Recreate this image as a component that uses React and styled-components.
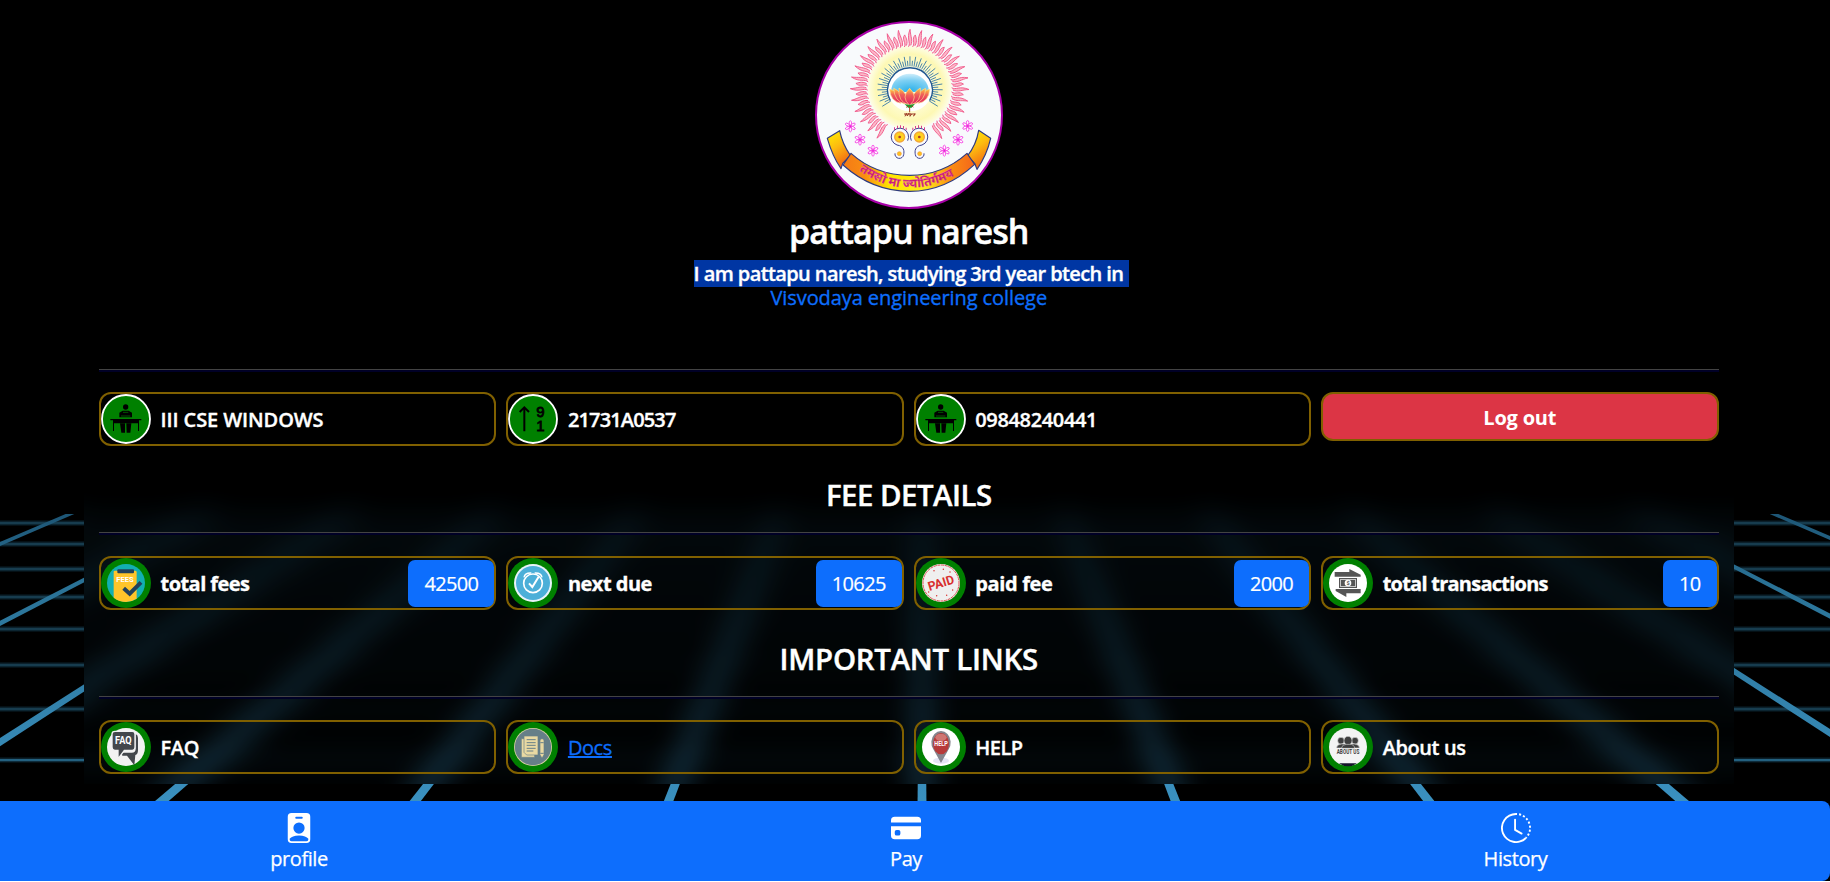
import React from "react";
import styled, { createGlobalStyle } from "styled-components";
import { BsPersonBadgeFill, BsCreditCardFill, BsClockHistory } from "react-icons/bs";

const GlobalStyle = createGlobalStyle`
  *, *::before, *::after { box-sizing: border-box; }
  body {
    margin: 0;
    background: #fff;
    overflow: hidden;
    font-family: "Open Sans", "Noto Sans", sans-serif;
    font-size: 20px;
    line-height: 24px;
    color: #fff;
  }
  h1, h2, p { margin: 0; }
`;

const Screen = styled.div`
  position: relative;
  display: flex;
  flex-direction: column;
  height: 881px;
  background: #000;
  overflow: hidden;
`;

const Backdrop = styled.svg`
  position: absolute;
  inset: 0;
  width: 1830px;
  height: 881px;
`;

const Panel = styled.main`
  position: relative;
  width: 1650px;
  height: 784px;
  margin-left: 84px;
  padding: 21px 15.5px 0 15px;
`;

const Intro = styled.header`
  display: flex;
  flex-direction: column;
  align-items: center;
  height: 348px;
  text-align: center;
`;

const Avatar = styled.svg`
  display: block;
  flex: none;
  width: 188px;
  height: 188px;
`;

const Name = styled.h1`
  margin-top: 1px;
  font-size: 34px;
  font-weight: 600;
  line-height: 42px;
  letter-spacing: -0.95px;
  -webkit-text-stroke: 0.5px currentColor;
`;

const Bio = styled.p`
  margin-top: 10px;
  font-weight: 600;
  letter-spacing: -0.6px;
  -webkit-text-stroke: 0.35px currentColor;
`;

const Selected = styled.span`
  margin-right: -5px;
  padding-right: 5.5px;
  background: #0036a3;
`;

const College = styled.span`
  font-weight: 400;
  letter-spacing: -0.08px;
  color: #0d6efd;
`;

const Divider = styled.div`
  height: 3px;
  border-top: 1px solid #434343;
  background: #000026;
`;

const Row = styled.div`
  display: grid;
  grid-template-columns: repeat(4, 1fr);
  gap: 10px;
  margin-top: ${(p) => p.$top || 21}px;
`;

const Heading = styled.h2`
  margin: 31px 0 19px;
  font-size: 29.4px;
  font-weight: 600;
  line-height: 36px;
  letter-spacing: ${(p) => p.$track}px;
  text-align: center;
  -webkit-text-stroke: 0.4px currentColor;
`;

const Card = styled.div`
  display: flex;
  align-items: center;
  height: 54px;
  border: 2px solid #806000;
  border-radius: 12px;
`;

const Round = styled.svg`
  flex: none;
  width: 50px;
  height: 50px;
`;

const Label = styled.span`
  flex: 1;
  padding: 1px 0 0 9.5px;
  font-weight: ${(p) => p.$weight || 600};
  letter-spacing: ${(p) => p.$track || 0}px;
  -webkit-text-stroke: 0.35px currentColor;
`;

const DocsLink = styled.a`
  font-weight: 400;
  color: #0d6efd;
  text-decoration: underline;
  text-decoration-thickness: 2px;
`;

const Amount = styled.span`
  height: 47px;
  padding: 12px 16px 0;
  border-radius: 7px;
  background: #0d6efd;
  font-weight: 400;
  letter-spacing: -0.64px;
  -webkit-text-stroke: 0.2px currentColor;
`;

const LogoutButton = styled.button`
  height: 49px;
  padding: 2px 0 0;
  border: 2px solid #806000;
  border-radius: 12px;
  background: #dc3545;
  font: 700 20px/24px "Open Sans", sans-serif;
  letter-spacing: -0.2px;
  color: #fff;
`;

const NavBar = styled.nav`
  position: relative;
  height: 80px;
  margin-top: 17px;
  padding-top: 12px;
  border-radius: 0 8px 8px 0;
  background: #0d6efd;
`;

const NavItems = styled.div`
  display: grid;
  grid-template-columns: 608px 606px 613px;
  margin-left: -5px;
`;

const NavItem = styled.div`
  display: flex;
  flex-direction: column;
  align-items: center;
  gap: 4px;
  letter-spacing: -0.4px;
  -webkit-text-stroke: 0.25px currentColor;
  svg { width: 30px; height: 30px; }
`;

/* Perspective floor: rays meet at (922, 148). */
const RAYS = [-7, -6, -5, -4, -3, -2, -1, 0, 1, 2, 3, 4, 5, 6, 7];
const LEVELS = [523, 544, 569, 597, 629, 665, 709, 760, 822];
const rayX = (k, y) => 922 + k * 0.388 * (y - 148);

function Floor() {
  return (
    <Backdrop viewBox="0 0 1830 881">
      <defs>
        <linearGradient id="ray" gradientUnits="userSpaceOnUse" x1="0" y1="512" x2="0" y2="800">
          <stop offset="0" stopColor="#1d5575" />
          <stop offset=".25" stopColor="#2a7296" />
          <stop offset="1" stopColor="#3a90bf" />
        </linearGradient>
        <clipPath id="panelArea"><rect x="84" y="0" width="1650" height="784" /></clipPath>
        <filter id="frost" filterUnits="userSpaceOnUse" x="0" y="400" width="1830" height="481" colorInterpolationFilters="sRGB">
          <feGaussianBlur stdDeviation="15" />
        </filter>
      </defs>
      <g id="floor">
        {LEVELS.map((y, i) => (
          <g key={y}>
            <rect x="-60" y={y - 2.5} width="1950" height="5" fill="#0b202b" />
            <rect x="-60" y={y - 1} width="1950" height="2.2" fill={i > 6 ? "#23607f" : "#173c4e"} />
          </g>
        ))}
        {RAYS.map((k) => {
          const slant = Math.hypot(1, k * 0.388);
          const a = 1.7 * slant;
          const b = 5.2 * Math.min(slant, 1.6);
          const pts = `${rayX(k, 514) - a},514 ${rayX(k, 514) + a},514 ${rayX(k, 881) + b},881 ${rayX(k, 881) - b},881`;
          return <polygon key={k} points={pts} fill="url(#ray)" />;
        })}
      </g>
      {/* frosted copy of the floor behind the panel */}
      <g clipPath="url(#panelArea)">
        <rect x="84" y="0" width="1650" height="784" fill="#000" />
        <g filter="url(#frost)" opacity=".85"><use href="#floor" /></g>
      </g>
    </Backdrop>
  );
}

const polar = (cx, cy, r, deg) => {
  const t = (deg * Math.PI) / 180;
  return [cx + r * Math.sin(t), cy - r * Math.cos(t)];
};
const FLAMES = Array.from({ length: 53 }, (_, i) => -147 + i * 5.65);
const BEAMS = Array.from({ length: 49 }, (_, i) => -122 + i * 5.08);
const FLOWERS = [[150, 349], [179, 389], [218, 422], [502, 348], [473, 389], [432, 422]];

function Flame({ deg, i }) {
  const tip = i % 2 ? 162 : 178;
  const f = (r, d) => polar(328, 236, r, deg + d).map((n) => n.toFixed(1)).join(" ");
  return (
    <path
      d={`M${f(126, -1.6)} C${f(138, 2)} ${f(150, -4)} ${f(tip, 0.5)} C${f(156, 1)} ${f(146, 4)} ${f(130, 1.6)}`}
      fill="#fcb8c8"
      stroke="#f0588a"
      strokeWidth="2.8"
    />
  );
}

function Foot() {
  return (
    <g fill="none" stroke="#3b3f8f" strokeWidth="3">
      <path d="M322 392 A26 26 0 1 0 290 405 C312 408 312 424 310 434 A13 13 0 1 1 284 430" />
      <circle cx="298" cy="381" r="15" fill="#ffd21f" stroke="#f2a63a" strokeWidth="4" />
      <circle cx="298" cy="381" r="4" fill="#a83c2a" stroke="none" />
      <circle cx="297" cy="431" r="6" fill="#ffc21a" stroke="#f29a3a" strokeWidth="2" />
      <path d="M281 356h3M290 351h3M299 350h3M308 352h3M316 357h3" stroke="#d8408c" strokeWidth="8" />
    </g>
  );
}

function Emblem() {
  return (
    <Avatar viewBox="44 33 564 564">
      <defs>
        <radialGradient id="glow">
          <stop offset="0" stopColor="#fff" />
          <stop offset=".5" stopColor="#fffcd2" />
          <stop offset=".8" stopColor="#fdf8b4" />
          <stop offset="1" stopColor="#fdfde8" />
        </radialGradient>
        <radialGradient id="sky" cx=".5" cy="1" r="1" gradientTransform="translate(0 -.1)">
          <stop offset="0" stopColor="#2fb2ea" />
          <stop offset=".55" stopColor="#7fd0f3" />
          <stop offset="1" stopColor="#e6f6fd" />
        </radialGradient>
        <linearGradient id="petal" x1="0" y1="0" x2="0" y2="1">
          <stop offset="0" stopColor="#ffc93d" />
          <stop offset=".4" stopColor="#f0605a" />
          <stop offset="1" stopColor="#dd1c62" />
        </linearGradient>
        <linearGradient id="tail" x1="0" y1="0" x2=".4" y2="1">
          <stop offset="0" stopColor="#fff200" />
          <stop offset=".5" stopColor="#fdbb10" />
          <stop offset="1" stopColor="#f26a12" />
        </linearGradient>
        <linearGradient id="band">
          <stop offset="0" stopColor="#f47a16" />
          <stop offset=".16" stopColor="#f98c12" />
          <stop offset=".36" stopColor="#ffe600" />
          <stop offset=".62" stopColor="#ffec1a" />
          <stop offset=".82" stopColor="#fb8c12" />
          <stop offset="1" stopColor="#f4661a" />
        </linearGradient>
      </defs>
      <circle cx="326" cy="315" r="279" fill="#f8fafc" stroke="#a800a8" strokeWidth="6" />
      <circle cx="328" cy="233" r="126" fill="url(#glow)" />
      {FLAMES.map((d, i) => <Flame key={d} deg={d} i={i} />)}
      <g stroke="#2f74a3" strokeWidth="2.6">
        {BEAMS.map((d, i) => {
          const [x1, y1] = polar(329, 237, 68, d);
          const [x2, y2] = polar(329, 237, i % 2 ? 85 : 98, d);
          return <line key={d} x1={x1} y1={y1} x2={x2} y2={y2} />;
        })}
      </g>
      <circle cx="329" cy="237" r="67" fill="#fff" />
      <path d="M270 272 A67 67 0 1 1 388 272" fill="none" stroke="#1f568f" strokeWidth="4" />
      <path d="M272 246 A57 55 0 0 1 386 246 Z" fill="url(#sky)" />
      <g fill="url(#petal)" stroke="#ffe08a" strokeWidth="2">
        <path d="M268 238 Q290 238 302 280 Q270 274 268 238Z" />
        <path d="M388 238 Q366 238 354 280 Q386 274 388 238Z" />
        <path d="M280 235 Q304 243 314 282 Q282 274 280 235Z" />
        <path d="M376 235 Q352 243 342 282 Q374 274 376 235Z" />
        <path d="M296 234 Q322 248 324 284 Q292 276 296 234Z" />
        <path d="M360 234 Q334 248 332 284 Q364 276 360 234Z" />
        <path d="M328 235 Q356 262 328 286 Q300 262 328 235Z" />
      </g>
      <path d="M313 282 Q328 287 344 281 L334 293 H323Z" fill="#1b9a2c" />
      <path d="M328 290v17M318 292l5-4M339 291l-5-4" stroke="#a63c22" strokeWidth="3" fill="none" />
      <path d="M311 312h35M314 319l4-9 3 8 5-9M329 310v9l5-7M338 318q6 0 5-7" stroke="#9c3a24" strokeWidth="3" fill="none" />
      <Foot />
      <g transform="translate(655 0) scale(-1 1)"><Foot /></g>
      {FLOWERS.map(([x, y]) => (
        <g key={`${x}-${y}`} fill="#fff" stroke="#f536e2" strokeWidth="2.4">
          {[0, 60, 120, 180, 240, 300].map((r) => (
            <ellipse key={r} cx={x} cy={y - 10} rx="3.6" ry="6.5" transform={`rotate(${r} ${x} ${y})`} />
          ))}
          <circle cx={x} cy={y} r="3" fill="#e020d0" />
        </g>
      ))}
      <g stroke="#2e3a80" strokeWidth="3.5" strokeLinejoin="round">
        <path d="M81 385 L118 362 Q126 402 150 436 L127 460 L122 476 Q96 438 81 385Z" fill="url(#tail)" />
        <path d="M571 385 L535 361 Q528 404 501 438 L523 460 L530 478 Q560 434 571 385Z" fill="url(#tail)" />
        <path d="M152 430 Q226 496 328 496 Q426 496 500 430 L523 463 Q436 544 328 544 Q216 544 128 465Z" fill="url(#band)" />
      </g>
      <path id="motto" d="M176 481 Q246 533 328 533 Q412 533 482 484" fill="none" />
      <text fontFamily="Noto Sans, sans-serif" fontSize="37" fontWeight="700" fill="#c81a72" stroke="#e86aa4" strokeWidth="1">
        <textPath href="#motto" textLength="304">तमसो मा ज्योतिर्गमय</textPath>
      </text>
    </Avatar>
  );
}

function Desk() {
  return (
    <Round viewBox="0 0 150 150">
      <circle cx="75" cy="75" r="72" fill="#008000" stroke="#fff" strokeWidth="5.5" />
      <g fill="#000">
        <circle cx="74" cy="39" r="8" />
        <path d="M65 50h18l10 6v14H55V56z" />
        <path d="M28 75h93v4h-7v32h-3V88H39v23h-3V79h-8z" />
        <path d="M57 88h15v28H61zM76 88h15l-3 28H77z" />
      </g>
      <path d="M66 55h16M60 66h28" stroke="#008000" strokeWidth="2" />
    </Round>
  );
}

function SortNumbers() {
  return (
    <Round viewBox="0 0 150 150">
      <circle cx="75" cy="75" r="72" fill="#008000" stroke="#fff" strokeWidth="5.5" />
      <path d="M49 112V40M35 54l14-14 14 14" fill="none" stroke="#000" strokeWidth="6" />
      <g fontFamily="Liberation Sans, sans-serif" fontSize="45" textAnchor="middle" stroke="#000" strokeWidth="2.5">
        <text x="97" y="68">9</text>
        <text x="97" y="112">1</text>
      </g>
    </Round>
  );
}

const Ring = ({ fill, children }) => (
  <Round viewBox="0 0 150 150">
    <circle cx="75" cy="75" r="75" fill="#008000" />
    <circle cx="75" cy="75" r="57" fill={fill} />
    {children}
  </Round>
);

const Fees = () => (
  <Ring fill="#12afb2">
    <path d="M38 41q0-3 4-3h60q5 0 5 4v80q-16 10-32 10-20 0-37-13z" fill="#ffc52a" />
    <rect x="49" y="34" width="50" height="12" rx="3" fill="#23415a" />
    <text x="72" y="71" fontFamily="Roboto, sans-serif" fontSize="23" fontWeight="700" textAnchor="middle" fill="#fff" textLength="52" lengthAdjust="spacingAndGlyphs">FEES</text>
    <path d="M68 91l18 16 34-34" fill="none" stroke="#23415a" strokeWidth="12" />
  </Ring>
);

const Clock = () => (
  <Ring fill="#e9f3f8">
    <circle cx="75" cy="75" r="51" fill="#4cafd8" />
    <g fill="none" stroke="#fff" strokeWidth="5">
      <circle cx="75" cy="76" r="28" />
      <path d="M63 76l10 11 19-31" strokeWidth="6" />
      <path d="M48 58q2-14 22-13M102 58q-2-14-22-13" strokeWidth="4" />
    </g>
  </Ring>
);

const Paid = () => (
  <Ring fill="#efefef">
    <circle cx="75" cy="75" r="54" fill="none" stroke="#e0504f" strokeWidth="3" strokeDasharray="9 2" />
    <g transform="rotate(-17 75 75)">
      <text x="75" y="88" fontFamily="Roboto, sans-serif" fontSize="38" fontWeight="700" textAnchor="middle" fill="#d8302f" textLength="80" lengthAdjust="spacingAndGlyphs">PAID</text>
    </g>
    <g fill="#d8302f">
      {[[54, 38], [82, 34], [102, 42], [110, 96], [92, 112], [62, 113], [38, 102]].map(([x, y]) => <circle key={x} cx={x} cy={y} r="2.2" />)}
    </g>
  </Ring>
);

const Transactions = () => (
  <Ring fill="#fff">
    <g fill="#555">
      <path d="M35 42h44V33l34 17v6H35zM113 93v13H70v11L38 99v-6z" />
      <rect x="48" y="60" width="54" height="30" />
    </g>
    <rect x="53" y="64" width="44" height="22" fill="none" stroke="#fff" strokeWidth="2" />
    <circle cx="75" cy="75" r="10" fill="#fff" />
    <text x="75" y="81" fontFamily="Roboto, sans-serif" fontSize="17" fontWeight="700" textAnchor="middle" fill="#555">$</text>
  </Ring>
);

const Faq = () => (
  <Ring fill="#f2f2f2">
    <path d="M104 36q7 3 7 12v37q0 12-8 14l-3 31-22-29H64l-2-9h30q12 0 12-12z" fill="#43474c" />
    <path d="M42 28h52q8 0 8 8v40q0 9-8 9H70L51 111V85h-9q-9 0-9-9V36q0-8 9-8z" fill="#43474c" stroke="#f2f2f2" strokeWidth="4" />
    <text x="67" y="66" fontFamily="Roboto, sans-serif" fontSize="32" fontWeight="700" textAnchor="middle" fill="#fff" textLength="50" lengthAdjust="spacingAndGlyphs">FAQ</text>
  </Ring>
);

const Docs = () => (
  <Ring fill="#d8d0a4">
    <circle cx="75" cy="75" r="54.5" fill="#667f88" />
    <g fill="#e9d9a2" stroke="#667f88" strokeWidth="2">
      <path d="M40 50h40v56H40z" />
      <path d="M48 42h42v57H56l-8-8z" />
      <path d="M96 56q0-6 6-6t6 6v42l-6 11-6-11z" />
    </g>
    <path d="M56 53h27M56 62h27M56 70h27M56 79h27M56 87h20M97 62h10M97 94h10" stroke="#667f88" strokeWidth="3" />
  </Ring>
);

const Help = () => (
  <Ring fill="#fff">
    <ellipse cx="75" cy="116" rx="24" ry="9" fill="#e4e4f4" />
    <path d="M75 123L52 82a29 34 0 1 1 46 0z" fill="#85858d" />
    <ellipse cx="75" cy="65" rx="24" ry="32" fill="#b73a3a" />
    <ellipse cx="75" cy="46" rx="17" ry="11" fill="#cf7572" />
    <text x="75" y="72" fontFamily="Roboto, sans-serif" fontSize="22" fontWeight="700" textAnchor="middle" fill="#fff" textLength="40" lengthAdjust="spacingAndGlyphs">HELP</text>
  </Ring>
);

const About = () => (
  <Ring fill="#f4f4f4">
    <path d="M48 124h54q-12 9-27 9t-27-9z" fill="#15152a" />
    <g fill="#3f3f3f" stroke="#f4f4f4" strokeWidth="1.5">
      <circle cx="54" cy="56" r="10" />
      <circle cx="96" cy="56" r="10" />
      <path d="M40 78q2-12 16-12h38q14 0 16 12z" />
      <ellipse cx="75" cy="56" rx="12" ry="13" />
      <path d="M55 79q2-12 15-12h10q14 0 15 12z" />
    </g>
    <text x="75" y="97" fontFamily="Roboto, sans-serif" fontSize="22" fontWeight="700" textAnchor="middle" fill="#3f3f3f" textLength="68" lengthAdjust="spacingAndGlyphs">ABOUT US</text>
  </Ring>
);

const FEES = [
  { icon: <Fees />, label: "total fees", amount: "42500", track: -0.55 },
  { icon: <Clock />, label: "next due", amount: "10625", track: -0.5 },
  { icon: <Paid />, label: "paid fee", amount: "2000", track: -0.35 },
  { icon: <Transactions />, label: "total transactions", amount: "10", track: -0.75 },
];

export default function App() {
  return (
    <Screen>
      <GlobalStyle />
      <Floor />
      <Panel>
        <Intro>
          <Emblem />
          <Name>pattapu naresh</Name>
          <Bio>
            <Selected>I am pattapu naresh, studying 3rd year btech in</Selected>
            <br />
            <College>Visvodaya engineering college</College>
          </Bio>
        </Intro>
        <Divider />
        <Row $top={20}>
          <Card><Desk /><Label $track={-0.1}>III CSE WINDOWS</Label></Card>
          <Card><SortNumbers /><Label $track={-0.85}>21731A0537</Label></Card>
          <Card><Desk /><Label $track={-0.35}>09848240441</Label></Card>
          <LogoutButton>Log out</LogoutButton>
        </Row>
        <Heading $track={-0.5}>FEE DETAILS</Heading>
        <Divider />
        <Row>
          {FEES.map((f) => (
            <Card key={f.label}>
              {f.icon}
              <Label $weight={700} $track={f.track}>{f.label}</Label>
              <Amount>{f.amount}</Amount>
            </Card>
          ))}
        </Row>
        <Heading $track={-0.25}>IMPORTANT LINKS</Heading>
        <Divider />
        <Row>
          <Card><Faq /><Label $track={-0.3}>FAQ</Label></Card>
          <Card><Docs /><Label $track={-0.4}><DocsLink>Docs</DocsLink></Label></Card>
          <Card><Help /><Label $track={-0.5}>HELP</Label></Card>
          <Card><About /><Label $track={-0.4}>About us</Label></Card>
        </Row>
      </Panel>
      <NavBar>
        <NavItems>
          <NavItem><BsPersonBadgeFill />profile</NavItem>
          <NavItem><BsCreditCardFill />Pay</NavItem>
          <NavItem><BsClockHistory />History</NavItem>
        </NavItems>
      </NavBar>
    </Screen>
  );
}
